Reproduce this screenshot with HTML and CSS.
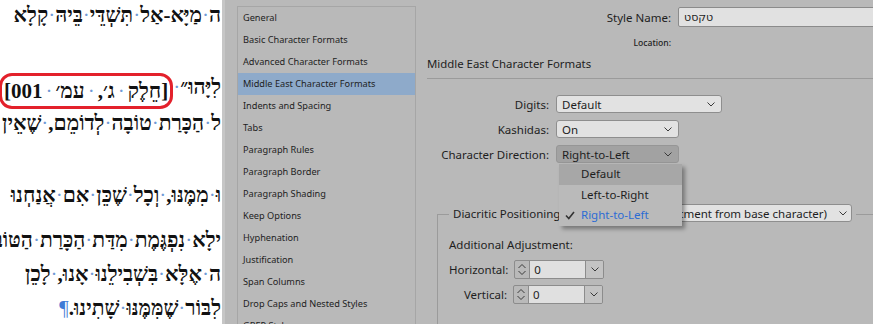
FILE: index.html
```html
<!DOCTYPE html>
<html lang="en">
<head>
  <meta charset="UTF-8" />
  <title>Paragraph Style Options</title>
  <link rel="stylesheet" href="styles.css">
</head>
<body>
  <div class="doc" dir="rtl">
    <p class="ln">ה<i>·</i>מַיָּא-אַל<i>·</i>תִּשְׁדֵּי<i>·</i>בֵּיהּ<i>·</i>קָלָא</p>
    <p class="ln"></p>
    <p class="ln">לִיָּהוּ״<i>·</i><span class="mark">[חֵלֶק<i>·</i>ג׳,<i>·</i>עמ׳<i>·</i>001]</span>,</p>
    <p class="ln">ל<i>·</i>הַכָּרַת<i>·</i>טוֹבָה<i>·</i>לְדוֹמֵם,<i>·</i>שֶׁאֵין</p>
    <p class="ln"></p>
    <p class="ln">וּ<i>·</i>מִמֶּנּוּ,<i>·</i>וְכָל<i>·</i>שֶׁכֵּן<i>·</i>אִם<i>·</i>אֲנַחְנוּ</p>
    <p class="ln tight first">ילָא<i>·</i>נִפְגֶּמֶת<i>·</i>מִדַּת<i>·</i>הַכָּרַת<i>·</i>הַטּוֹב</p>
    <p class="ln tight">ה<i>·</i>אֶלָּא<i>·</i>בִּשְׁבִילֵנוּ<i>·</i>אָנוּ,<i>·</i>לָכֵן</p>
    <p class="ln tight">לִבּוֹר<i>·</i>שֶׁמִּמֶּנּוּ<i>·</i>שָׁתִינוּ.<b>¶</b></p>
  </div>

  <div class="dialog">
    <ul class="cats">
      <li>General</li>
      <li>Basic Character Formats</li>
      <li>Advanced Character Formats</li>
      <li class="active">Middle East Character Formats</li>
      <li>Indents and Spacing</li>
      <li>Tabs</li>
      <li>Paragraph Rules</li>
      <li>Paragraph Border</li>
      <li>Paragraph Shading</li>
      <li>Keep Options</li>
      <li>Hyphenation</li>
      <li>Justification</li>
      <li>Span Columns</li>
      <li>Drop Caps and Nested Styles</li>
      <li>GREP Style</li>
    </ul>

    <div class="main">
      <div class="name-row">
        <span class="name-label">Style Name:</span>
        <div class="text-input"><span dir="rtl">טקסט</span></div>
      </div>
      <div class="loc-row">Location:</div>
      <h2 class="section">Middle East Character Formats</h2>

      <div class="form">
        <div class="row">
          <span class="label">Digits:</span>
          <div class="select wide"><span>Default</span><svg width="8" height="5" viewBox="0 0 8 5"><path d="M0.5 0.5l3.5 3.5 3.5-3.5" fill="none" stroke="#3a3a3a"/></svg></div>
        </div>
        <div class="row">
          <span class="label">Kashidas:</span>
          <div class="select"><span>On</span><svg width="8" height="5" viewBox="0 0 8 5"><path d="M0.5 0.5l3.5 3.5 3.5-3.5" fill="none" stroke="#3a3a3a"/></svg></div>
        </div>
        <div class="row">
          <span class="label">Character Direction:</span>
          <div class="select open"><span>Right-to-Left</span><svg width="8" height="5" viewBox="0 0 8 5"><path d="M0.5 0.5l3.5 3.5 3.5-3.5" fill="none" stroke="#3a3a3a"/></svg></div>
        </div>
      </div>

      <div class="group">
        <div class="legend">
          <span class="legend-label">Diacritic Positioning:</span>
          <div class="select flex"><span class="val">Default (Adjustment from base character)</span><svg width="8" height="5" viewBox="0 0 8 5"><path d="M0.5 0.5l3.5 3.5 3.5-3.5" fill="none" stroke="#3a3a3a"/></svg></div>
        </div>
        <div class="sub">Additional Adjustment:</div>
        <div class="spin-row">
          <span class="spin-label">Horizontal:</span>
          <div class="spin">
            <span class="arrows"><svg width="8" height="13" viewBox="0 0 8 13"><path d="M0.5 5l3.5-3.5 3.5 3.5M0.5 8l3.5 3.5 3.5-3.5" fill="none" stroke="#3a3a3a"/></svg></span>
            <span class="num">0</span>
            <span class="drop"><svg width="8" height="5" viewBox="0 0 8 5"><path d="M0.5 0.5l3.5 3.5 3.5-3.5" fill="none" stroke="#3a3a3a"/></svg></span>
          </div>
        </div>
        <div class="spin-row">
          <span class="spin-label">Vertical:</span>
          <div class="spin">
            <span class="arrows"><svg width="8" height="13" viewBox="0 0 8 13"><path d="M0.5 5l3.5-3.5 3.5 3.5M0.5 8l3.5 3.5 3.5-3.5" fill="none" stroke="#3a3a3a"/></svg></span>
            <span class="num">0</span>
            <span class="drop"><svg width="8" height="5" viewBox="0 0 8 5"><path d="M0.5 0.5l3.5 3.5 3.5-3.5" fill="none" stroke="#3a3a3a"/></svg></span>
          </div>
        </div>
      </div>
    </div>

    <!-- open Character Direction menu -->
    <ul class="menu">
      <li class="hover">Default</li>
      <li>Left-to-Right</li>
      <li class="checked"><svg width="10" height="9" viewBox="0 0 10 9"><path d="M1 4.5l2.8 3 5.2-6.5" fill="none" stroke="#333" stroke-width="1.6"/></svg>Right-to-Left</li>
    </ul>
  </div>
</body>
</html>
```

FILE: styles.css
```css
* {
  margin: 0;
  padding: 0;
  box-sizing: border-box;
}

body {
  width: 873px;
  height: 324px;
  position: relative;
  overflow: hidden;
  background: #fff;
  font-family: 'Noto Sans', 'DejaVu Sans', sans-serif;
  color: #1e1e1e;
}

/* Hebrew document behind the dialog */
.doc {
  width: 222px;
  height: 324px;
  overflow: hidden;
  padding-right: 1px;
  margin-top: -3px;
  font-family: 'Liberation Serif', 'DejaVu Serif', serif;
  font-weight: bold;
  font-size: 21px;
  color: #111;
}

.ln {
  height: 36px;
  line-height: 36px;
  white-space: nowrap;
  text-align: right;
}

.ln.tight {
  height: 34px;
  line-height: 34px;
}

.ln.first {
  margin-top: 10px;
}

.ln i {
  font-style: normal;
  font-weight: normal;
  color: #6f9ad6;
}

.ln b {
  font-weight: normal;
  color: #3f7bd6;
}

.mark {
  display: inline-block;
  line-height: 30px;
  padding: 0 2px;
  font-size: 21px;
  border: 3px solid #e3212b;
  border-radius: 13px;
  vertical-align: -4px;
}

.mark i {
  padding: 0 3px;
}

/* dialog window */
.dialog {
  position: absolute;
  left: 222px;
  top: 0;
  right: 0;
  bottom: 0;
  display: flex;
  overflow: hidden;
  background: #b9b9b9;
  border-left: 3px solid #c6c6c6;
}

.cats {
  list-style: none;
  flex: 0 0 179px;
  margin: 6px 0 0 12px;
  border: 1px solid #a6a6a6;
  border-bottom: none;
  font-size: 9.2px;
}

.cats li {
  height: 22px;
  line-height: 22px;
  padding-left: 5px;
  white-space: nowrap;
}

.cats li.active {
  background: #8eaaca;
}

.main {
  flex: 1;
  min-width: 0;
  padding-left: 11px;
  font-size: 11.5px;
}

.name-row {
  display: flex;
  align-items: center;
  gap: 7px;
  margin-top: 7px;
  height: 20px;
}

.name-label {
  flex: 0 0 244px;
  text-align: right;
}

.text-input {
  flex: 0 0 240px;
  height: 20px;
  line-height: 18px;
  padding-left: 5px;
  background: #e1e1e1;
  border: 1px solid #8b8b8b;
  border-radius: 2px;
  font-size: 11px;
}

.loc-row {
  width: 244px;
  margin-top: 10px;
  height: 12px;
  line-height: 12px;
  text-align: right;
  font-size: 8.6px;
  font-weight: 500;
}

.section {
  margin-top: 7px;
  height: 23px;
  line-height: 16px;
  border-bottom: 1px solid #9b9b9b;
  font-size: 11.4px;
  font-weight: normal;
}

.form {
  margin-top: 16px;
  display: flex;
  flex-direction: column;
  gap: 7px;
}

.row {
  display: flex;
  align-items: center;
  gap: 7px;
  height: 18px;
}

.label {
  flex: 0 0 122px;
  text-align: right;
}

.select {
  display: flex;
  align-items: center;
  justify-content: space-between;
  width: 123px;
  height: 18px;
  padding: 0 6px 0 5px;
  background: #e2e2e2;
  border: 1px solid #8e8e8e;
  border-radius: 3px;
  white-space: nowrap;
}

.select.wide {
  width: 166px;
}

.select.open {
  background: #a2a2a2;
  border-color: #969696;
}

.group {
  margin: 51px 0 0 10px;
  height: 140px;
  border-top: 1px solid #9b9b9b;
  border-left: 1px solid #9b9b9b;
}

.legend {
  display: flex;
  align-items: center;
  gap: 6px;
  width: 407px;
  margin: -11px 0 0 11px;
  padding: 0 4px;
  background: #b9b9b9;
}

.legend-label {
  white-space: nowrap;
}

.select.flex {
  flex: 1;
  width: auto;
  padding-right: 4px;
}

.select .val {
  flex: 1;
  text-align: right;
  padding-right: 12px;
}

.sub {
  margin: 15px 0 0 11px;
  line-height: 16px;
}

.spin-row {
  display: flex;
  align-items: center;
  gap: 6px;
  margin: 7px 0 0 11px;
}

.spin-row + .spin-row {
  margin-top: 6px;
}

.spin-label {
  flex: 0 0 58px;
  text-align: right;
}

.spin {
  display: flex;
  width: 90px;
  height: 19px;
  border: 1px solid #8c8c8c;
  border-radius: 2px;
  overflow: hidden;
}

.spin .arrows {
  flex: 0 0 15px;
  display: flex;
  align-items: center;
  justify-content: center;
  border-right: 1px solid #8c8c8c;
}

.spin .num {
  flex: 1;
  padding-left: 4px;
  line-height: 17px;
  background: #e0e0e0;
}

.spin .drop {
  flex: 0 0 18px;
  display: flex;
  align-items: center;
  justify-content: center;
  border-left: 1px solid #8c8c8c;
  background: #c3c3c3;
}

/* popup list of the open select */
.menu {
  position: absolute;
  left: 334px;
  top: 164px;
  width: 123px;
  list-style: none;
  background: #bababa;
  box-shadow: 3px 3px 4px rgba(0, 0, 0, 0.35);
  font-size: 11.5px;
}

.menu li {
  position: relative;
  height: 20.7px;
  line-height: 20.7px;
  padding-left: 22px;
}

.menu li.hover {
  background: #a7a7a7;
}

.menu li.checked {
  color: #2c6cd4;
}

.menu li svg {
  position: absolute;
  left: 6px;
  top: 6px;
}
```
